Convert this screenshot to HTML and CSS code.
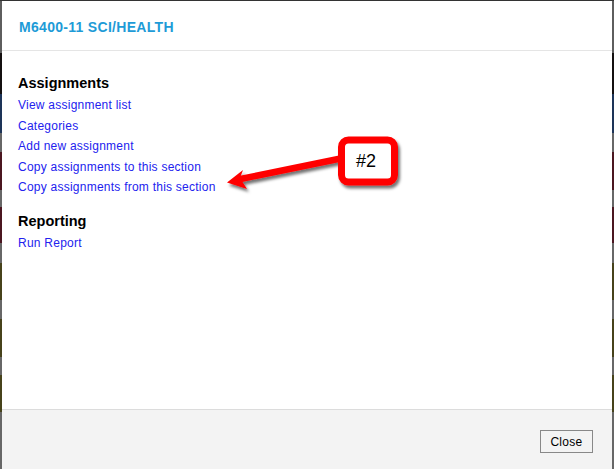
FILE: index.html
```html
<!DOCTYPE html>
<html>
<head>
<meta charset="utf-8">
<link rel="stylesheet" href="styles.css">
</head>
<body>
<div class="modal">
  <div class="modal-header">
    <h2 class="title">M6400-11 SCI/HEALTH</h2>
  </div>
  <div class="modal-body">
    <section class="group">
      <h3 class="group-title">Assignments</h3>
      <a class="link" href="#">View assignment list</a>
      <a class="link" href="#">Categories</a>
      <a class="link" href="#">Add new assignment</a>
      <a class="link" href="#">Copy assignments to this section</a>
      <a class="link" href="#">Copy assignments from this section</a>
    </section>
    <section class="group group-next">
      <h3 class="group-title">Reporting</h3>
      <a class="link" href="#">Run Report</a>
    </section>
  </div>
  <div class="modal-footer">
    <button class="btn-close" type="button">Close</button>
  </div>
</div>
<svg class="annotation" width="614" height="469" viewBox="0 0 614 469">
  <defs>
    <filter id="shadow" x="-20%" y="-20%" width="150%" height="150%">
      <feDropShadow dx="2" dy="3" stdDeviation="1.5" flood-color="#000" flood-opacity="0.55"/>
    </filter>
  </defs>
  <g filter="url(#shadow)">
    <line x1="238" y1="179.5" x2="348" y2="157" stroke="#ff0000" stroke-width="6.5"/>
    <polygon points="227,182.5 243,170 240,178 247,189" fill="#ff0000"/>
    <rect x="341.5" y="140" width="53" height="42" rx="7" ry="7" fill="#fff" stroke="#ff0000" stroke-width="7"/>
  </g>
  <text x="366" y="167" text-anchor="middle" class="badge-text">#2</text>
</svg>
</body>
</html>
```

FILE: styles.css
```css
html, body {
  margin: 0;
  padding: 0;
}
*, *::before, *::after {
  box-sizing: border-box;
}
body {
  width: 614px;
  height: 469px;
  overflow: hidden;
  position: relative;
  font-family: "Liberation Sans", Arial, sans-serif;
  background: linear-gradient(to bottom,
    #333 0 1px,
    #5e5e5e 1px 53px,
    #141010 53px 94px,
    #1d3458 94px 133px,
    #676767 133px 152px,
    #4b1620 152px 190px,
    #676767 190px 207px,
    #4b1620 207px 243px,
    #676767 243px 263px,
    #47431b 263px 300px,
    #676767 300px 319px,
    #47431b 319px 357px,
    #676767 357px 375px,
    #47431b 375px 412px,
    #676767 412px);
}
.modal {
  margin: 1px 2px 0 2px;
  height: 468px;
  background: #fff;
  display: flex;
  flex-direction: column;
}
.modal-header {
  height: 50px;
  flex: none;
  border-bottom: 1px solid #e5e5e5;
  display: flex;
  align-items: center;
  padding-left: 17px;
}
.title {
  margin: 0;
  font-size: 14px;
  font-weight: bold;
  letter-spacing: 0.3px;
  color: #1e9bd7;
  line-height: 18px;
  position: relative;
  top: 1px;
}
.modal-body {
  flex: 1;
  padding: 23px 16px 0 16px;
}
.group {
  display: flex;
  flex-direction: column;
  align-items: flex-start;
}
.group-next {
  margin-top: 14px;
}
.group-title {
  margin: 0 0 3px 0;
  font-size: 14.5px;
  line-height: 18px;
  font-weight: bold;
  color: #000;
}
.link {
  font-size: 12px;
  line-height: 20.5px;
  letter-spacing: 0.24px;
  color: #2222ee;
  text-decoration: none;
}
.modal-footer {
  height: 60px;
  flex: none;
  border-top: 1px solid #dcdcdc;
  background: #f3f3f3;
  display: flex;
  justify-content: flex-end;
  align-items: flex-start;
  padding: 20px 19px 0 0;
}
.btn-close {
  width: 53px;
  height: 23px;
  border: 1px solid #888;
  background: #f3f3f3;
  font-family: "Liberation Sans", Arial, sans-serif;
  font-size: 12px;
  letter-spacing: 0.3px;
  color: #000;
  padding: 0;
  margin: 0;
}
.annotation {
  position: absolute;
  left: 0;
  top: 0;
  pointer-events: none;
}
.badge-text {
  font-family: "Liberation Sans", Arial, sans-serif;
  font-size: 18px;
  fill: #000;
}
```
